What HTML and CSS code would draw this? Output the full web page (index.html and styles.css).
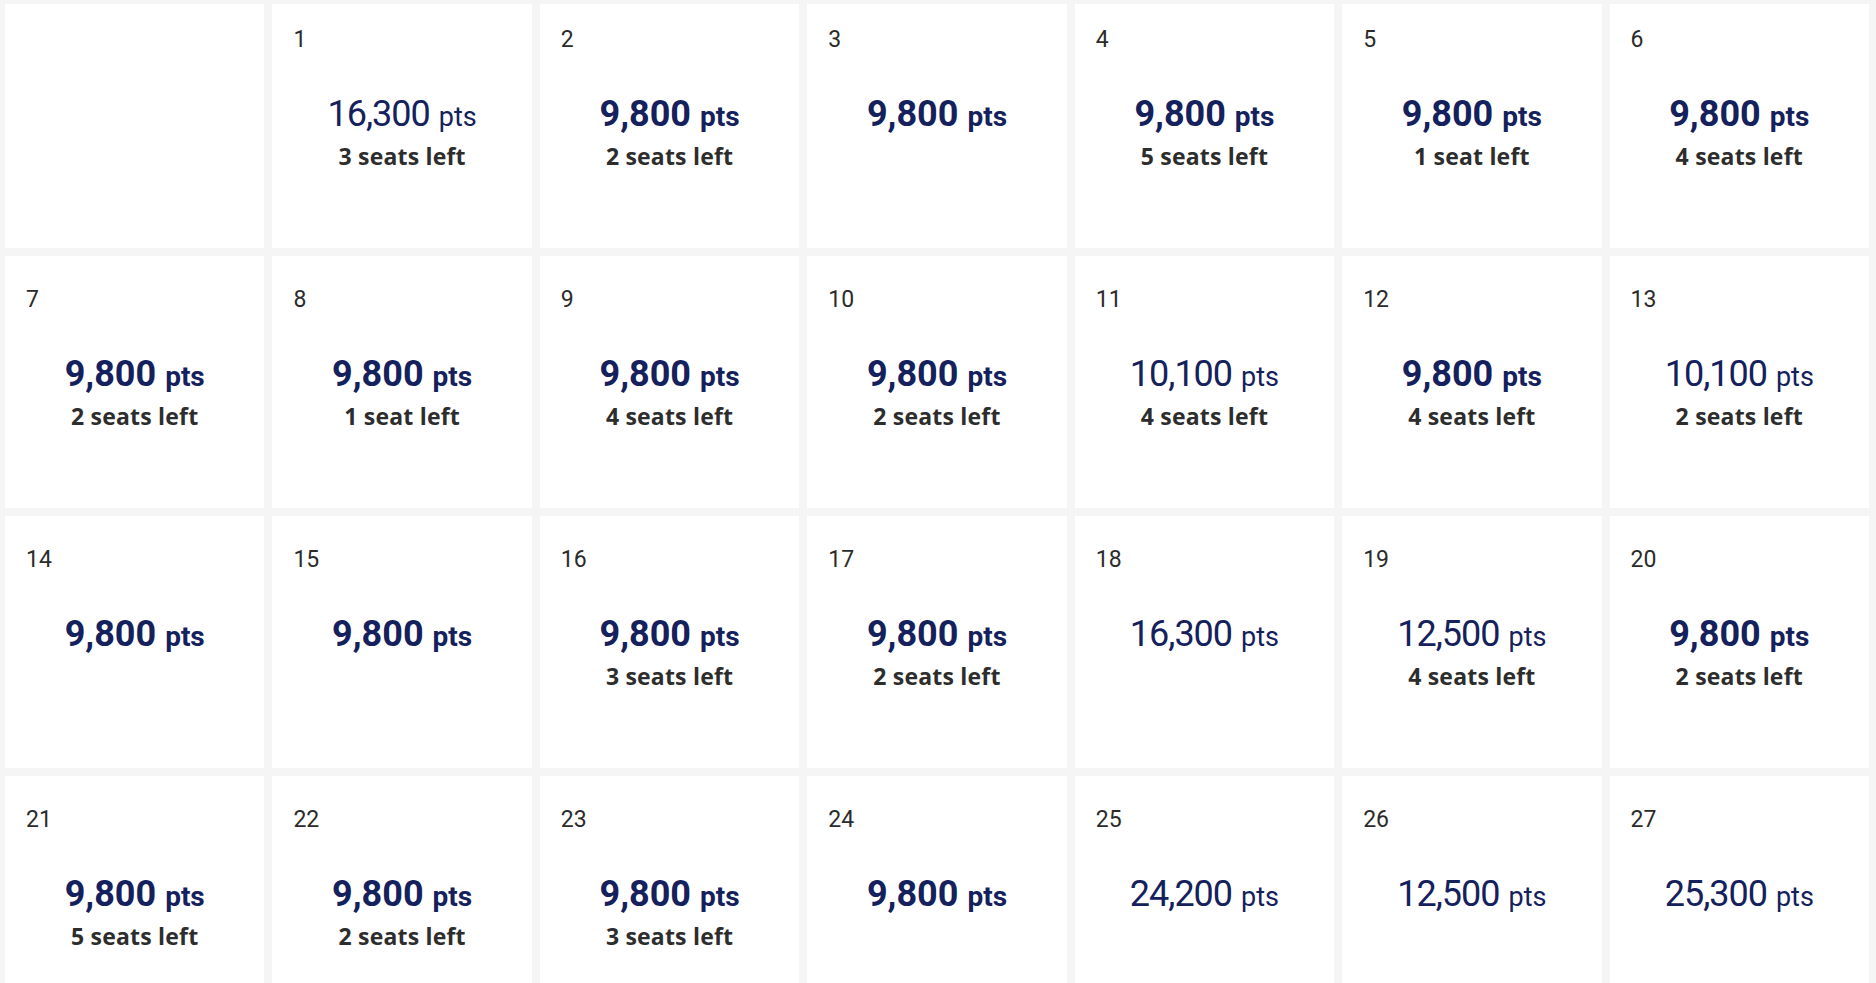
FILE: index.html
```html
<!DOCTYPE html>
<html lang="en">
<head>
<meta charset="utf-8">
<title>Calendar</title>
<link rel="stylesheet" href="styles.css">
</head>
<body>
<div class="cal">
  <div class="cell first"></div>
  <div class="cell first"><div class="day">1</div><div class="price reg"><span class="num">16,300</span><span class="pts">pts</span></div><div class="seats">3 seats left</div></div>
  <div class="cell first"><div class="day">2</div><div class="price"><span class="num">9,800</span><span class="pts">pts</span></div><div class="seats">2 seats left</div></div>
  <div class="cell first"><div class="day">3</div><div class="price"><span class="num">9,800</span><span class="pts">pts</span></div></div>
  <div class="cell first"><div class="day">4</div><div class="price"><span class="num">9,800</span><span class="pts">pts</span></div><div class="seats">5 seats left</div></div>
  <div class="cell first"><div class="day">5</div><div class="price"><span class="num">9,800</span><span class="pts">pts</span></div><div class="seats">1 seat left</div></div>
  <div class="cell first"><div class="day">6</div><div class="price"><span class="num">9,800</span><span class="pts">pts</span></div><div class="seats">4 seats left</div></div>

  <div class="cell"><div class="day">7</div><div class="price"><span class="num">9,800</span><span class="pts">pts</span></div><div class="seats">2 seats left</div></div>
  <div class="cell"><div class="day">8</div><div class="price"><span class="num">9,800</span><span class="pts">pts</span></div><div class="seats">1 seat left</div></div>
  <div class="cell"><div class="day">9</div><div class="price"><span class="num">9,800</span><span class="pts">pts</span></div><div class="seats">4 seats left</div></div>
  <div class="cell"><div class="day">10</div><div class="price"><span class="num">9,800</span><span class="pts">pts</span></div><div class="seats">2 seats left</div></div>
  <div class="cell"><div class="day">11</div><div class="price reg"><span class="num">10,100</span><span class="pts">pts</span></div><div class="seats">4 seats left</div></div>
  <div class="cell"><div class="day">12</div><div class="price"><span class="num">9,800</span><span class="pts">pts</span></div><div class="seats">4 seats left</div></div>
  <div class="cell"><div class="day">13</div><div class="price reg"><span class="num">10,100</span><span class="pts">pts</span></div><div class="seats">2 seats left</div></div>

  <div class="cell"><div class="day">14</div><div class="price"><span class="num">9,800</span><span class="pts">pts</span></div></div>
  <div class="cell"><div class="day">15</div><div class="price"><span class="num">9,800</span><span class="pts">pts</span></div></div>
  <div class="cell"><div class="day">16</div><div class="price"><span class="num">9,800</span><span class="pts">pts</span></div><div class="seats">3 seats left</div></div>
  <div class="cell"><div class="day">17</div><div class="price"><span class="num">9,800</span><span class="pts">pts</span></div><div class="seats">2 seats left</div></div>
  <div class="cell"><div class="day">18</div><div class="price reg"><span class="num">16,300</span><span class="pts">pts</span></div></div>
  <div class="cell"><div class="day">19</div><div class="price reg"><span class="num">12,500</span><span class="pts">pts</span></div><div class="seats">4 seats left</div></div>
  <div class="cell"><div class="day">20</div><div class="price"><span class="num">9,800</span><span class="pts">pts</span></div><div class="seats">2 seats left</div></div>

  <div class="cell"><div class="day">21</div><div class="price"><span class="num">9,800</span><span class="pts">pts</span></div><div class="seats">5 seats left</div></div>
  <div class="cell"><div class="day">22</div><div class="price"><span class="num">9,800</span><span class="pts">pts</span></div><div class="seats">2 seats left</div></div>
  <div class="cell"><div class="day">23</div><div class="price"><span class="num">9,800</span><span class="pts">pts</span></div><div class="seats">3 seats left</div></div>
  <div class="cell"><div class="day">24</div><div class="price"><span class="num">9,800</span><span class="pts">pts</span></div></div>
  <div class="cell"><div class="day">25</div><div class="price reg"><span class="num">24,200</span><span class="pts">pts</span></div></div>
  <div class="cell"><div class="day">26</div><div class="price reg"><span class="num">12,500</span><span class="pts">pts</span></div></div>
  <div class="cell"><div class="day">27</div><div class="price reg"><span class="num">25,300</span><span class="pts">pts</span></div></div>
</div>
</body>
</html>
```

FILE: styles.css
```css
html, body {
  margin: 0;
  padding: 0;
  height: 983px;
  overflow: hidden;
  background: #f5f5f5;
}

.cal {
  display: grid;
  grid-template-columns: repeat(7, 1fr);
  grid-template-rows: 244px 252px 252px 252px;
  gap: 8px;
  padding: 4px 7px 0 5px;
  font-family: "Roboto", "Liberation Sans", sans-serif;
}

.cell {
  background: #ffffff;
  padding: 30px 0 0 21px;
  box-sizing: border-box;
  display: flex;
  flex-direction: column;
}

.cell.first {
  padding-top: 22px;
}

.day {
  font-size: 23px;
  line-height: 28px;
  height: 28px;
  color: #2b2b2b;
}

.price {
  margin: 38px 21px 0 0;
  text-align: center;
  color: #14215c;
  font-size: 36px;
  font-weight: 700;
  line-height: 44px;
  white-space: nowrap;
}

.price .num {
  font-size: 36px;
}

.price .pts {
  font-size: 28px;
  margin-left: 9px;
}

.price.reg {
  font-weight: 400;
}

.price.reg .num {
  letter-spacing: -1px;
}

.price.reg .pts {
  font-size: 27px;
  margin-left: 9px;
}

.seats {
  margin: 0 21px 0 0;
  text-align: center;
  font-family: "Open Sans", "Roboto", sans-serif;
  font-size: 23px;
  font-weight: 700;
  line-height: 34px;
  letter-spacing: 0.2px;
  color: #2d2d2d;
}
```
